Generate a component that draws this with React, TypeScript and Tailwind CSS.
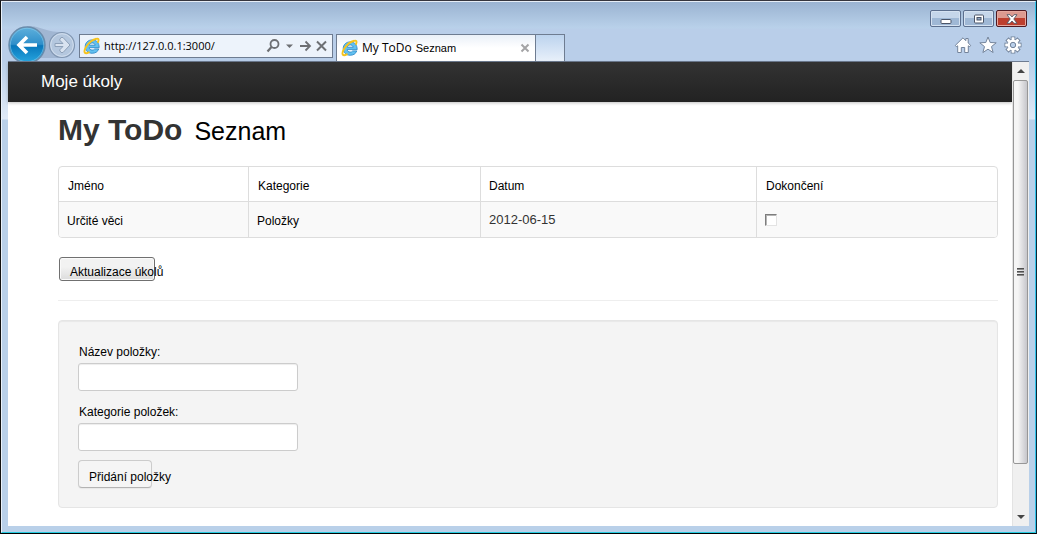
import React, { useState } from 'react';

function IeLogo() {
  return (
    <svg viewBox="0 0 18 18" className="h-[18px] w-[18px] shrink-0" aria-hidden="true">
      <path
        d="M16.200 10.600H6.200c.2 1.600 1.400 2.500 3 2.500 1.100 0 2-.4 2.500-1.200h4.100c-.9 2.700-3.400 4.400-6.600 4.400-4.100 0-7-2.700-7-6.700 0-3.900 2.900-6.700 7-6.700 4.200 0 7 2.900 7 7.700zM6.300 8.200h5.800c-.2-1.400-1.300-2.300-2.800-2.300-1.600 0-2.700.9-3 2.300z"
        fill="#62c0ef"
        stroke="#2583c4"
        strokeWidth="0.8"
      />
      <path
        d="M15 5c1.200-2.500.4-3.700-1.700-3.200C10 2.500 5.500 6.100 3 10c-2.100 3.500-2.100 6.300.2 6.200.8 0 1.700-.4 2.600-.9"
        fill="none"
        stroke="#f5c31c"
        strokeWidth="1.900"
        strokeLinecap="round"
      />
    </svg>
  );
}

function NavigationButtons() {
  return (
    <div className="relative flex h-9 items-start self-end overflow-hidden">
      <svg viewBox="0 0 71 36" className="absolute top-0 left-0 h-9 w-[71px]" aria-hidden="true">
        <path d="M20 1C36 1 36 7 55 7V33H20Z" fill="#93a9c6" opacity="0.65" />
      </svg>
      <button type="button" aria-label="Zpět" className="relative h-9 w-10">
        <svg viewBox="0 0 40 36" className="h-9 w-10">
          <defs>
            <linearGradient id="backFill" x1="0" y1="0" x2="0" y2="1">
              <stop offset="0" stopColor="#5fb0dc" />
              <stop offset="0.48" stopColor="#2f8fca" />
              <stop offset="0.52" stopColor="#0877bb" />
              <stop offset="1" stopColor="#28a7e0" />
            </linearGradient>
          </defs>
          <circle cx="20" cy="20" r="18" fill="url(#backFill)" stroke="#6a8cab" strokeWidth="1.500" />
          <circle cx="20" cy="20" r="16.700" fill="none" stroke="#8ccbea" strokeWidth="0.600" />
          <path d="M30 20H12M20 12 12 20l8 8" fill="none" stroke="#fff" strokeWidth="3.600" />
        </svg>
      </button>
      <button type="button" aria-label="Vpřed" className="relative h-9 w-8">
        <svg viewBox="0 0 32 36" className="h-9 w-8">
          <circle cx="15" cy="20" r="12.500" fill="#b4c7de" stroke="#8196b1" strokeWidth="1.200" />
          <circle cx="15" cy="20" r="11.300" fill="none" stroke="#d4e0ee" strokeWidth="0.900" />
          <path
            d="M8 18.500h8l-3.500-3.500 1.500-2.500h2l7 7.500-7 7.500h-2l-1.500-2.500 3.500-3.500H8z"
            fill="#d9e3f0"
            stroke="#8da0b8"
            strokeWidth="1"
          />
        </svg>
      </button>
    </div>
  );
}

function AddressBar() {
  const [address, setAddress] = useState('http://127.0.0.1:3000/');
  return (
    <div className="mb-[3px] flex h-6 w-[254px] items-center border border-[#6e7c91] bg-[#edf3fb] pl-[3px]">
      <IeLogo />
      <input
        aria-label="Adresa"
        value={address}
        onChange={(e) => setAddress(e.target.value)}
        className="ml-[3px] min-w-0 flex-1 bg-transparent font-['Open_Sans',sans-serif] text-[11px] leading-5 text-black outline-none"
      />
      <button type="button" aria-label="Hledat" className="w-4">
        <svg viewBox="0 0 16 16" className="h-4 w-4" fill="none" stroke="#6d6f73" strokeWidth="1.800">
          <circle cx="9.500" cy="6" r="4" />
          <path d="M6.500 9 2.500 13.500" strokeWidth="2.200" />
        </svg>
      </button>
      <button type="button" aria-label="Historie adres" className="w-4">
        <svg viewBox="0 0 16 16" className="h-4 w-4">
          <path d="M5 6.500h7L8.500 10z" fill="#6d6f73" />
        </svg>
      </button>
      <button type="button" aria-label="Přejít" className="w-4">
        <svg viewBox="0 0 16 16" className="h-4 w-4" fill="none" stroke="#6d6f73" strokeWidth="1.800">
          <path d="M3 8h10M8.500 3.500 13 8l-4.500 4.500" />
        </svg>
      </button>
      <button type="button" aria-label="Zastavit" className="mr-[3px] w-4">
        <svg viewBox="0 0 16 16" className="h-4 w-4" fill="none" stroke="#6d6f73" strokeWidth="2">
          <path d="m4 3.500 9 9M13 3.500l-9 9" />
        </svg>
      </button>
    </div>
  );
}

function Tabs() {
  return (
    <div className="ml-[3px] flex h-[27px]">
      <div className="flex w-[200px] items-center border border-b-0 border-[#6e7c91] bg-linear-to-b from-[#eaf0f8] to-white to-50% pl-1">
        <IeLogo />
        <a href="#todo" className="ml-[3px] flex flex-1 items-baseline gap-1 text-black">
          <span className="font-['Open_Sans',sans-serif] text-[12px] leading-5">My ToDo</span>
          <span className="text-[11px] leading-5">Seznam</span>
        </a>
        <button type="button" aria-label="Zavřít kartu" className="mr-1">
          <svg viewBox="0 0 12 12" className="h-3 w-3" fill="none" stroke="#a4a4a6" strokeWidth="2">
            <path d="m2.500 2.500 7 7M9.500 2.500l-7 7" />
          </svg>
        </button>
      </div>
      <button
        type="button"
        aria-label="Nová karta"
        className="w-[29px] border border-b-0 border-l-0 border-[#6e7c91] bg-linear-to-b from-[#bcd3ee] to-[#e8f0fa]"
      />
    </div>
  );
}

const captionBase = 'flex h-[17px] w-[31px] items-center justify-center rounded-[2px] border';

function WindowControls() {
  return (
    <div className="flex gap-[2px]">
      <button
        type="button"
        aria-label="Minimalizovat"
        className={`${captionBase} border-[#5c6f8e] bg-linear-to-b from-[#c5d6ea] from-45% to-[#9fb8d5] to-50% shadow-[inset_0_0_0_1px_#d5e2f1]`}
      >
        <svg viewBox="0 0 12 10" className="h-[10px] w-3">
          <rect x="1" y="5.500" width="10" height="4" rx="1" fill="#fff" stroke="#4b5568" />
        </svg>
      </button>
      <button
        type="button"
        aria-label="Maximalizovat"
        className={`${captionBase} border-[#5c6f8e] bg-linear-to-b from-[#c5d6ea] from-45% to-[#9fb8d5] to-50% shadow-[inset_0_0_0_1px_#d5e2f1]`}
      >
        <svg viewBox="0 0 12 10" className="h-[10px] w-3">
          <rect x="1.500" y="1" width="9" height="8" rx="1" fill="#fff" stroke="#4b5568" />
          <rect x="4" y="3.500" width="4" height="2.500" fill="#8fa7c5" stroke="#4b5568" />
        </svg>
      </button>
      <button
        type="button"
        aria-label="Zavřít"
        className={`${captionBase} border-[#4f1a22] bg-linear-to-b from-[#dc9a90] from-45% to-[#bd3f2e] to-50% shadow-[inset_0_0_0_1px_#e6a99f]`}
      >
        <svg viewBox="0 0 12 10" className="h-[10px] w-3">
          <path
            d="M1 .7h3l2 2.300 2-2.300h3L7.800 5 11 9.300H8L6 7 4 9.300H1L4.200 5z"
            fill="#fff"
            stroke="#555a68"
            strokeWidth="0.900"
          />
        </svg>
      </button>
    </div>
  );
}

function ToolIcons() {
  const teeth = [0, 45, 90, 135, 180, 225, 270, 315];
  return (
    <div className="mr-[5px] flex gap-[7px]">
      <button type="button" aria-label="Domů">
        <svg viewBox="0 0 18 18" className="h-[18px] w-[18px]">
          <path
            d="M9 1.800 1.300 9.400l1 1.300L3.700 9.800V16.500H7.300V11.500h3.400v5h3.600V9.800l1.400.9 1-1.300L14.200 7V2.500h-2.400v2.200z"
            fill="#fff"
            stroke="#73839a"
            strokeLinejoin="round"
          />
        </svg>
      </button>
      <button type="button" aria-label="Oblíbené">
        <svg viewBox="0 0 18 18" className="h-[18px] w-[18px]">
          <path
            d="m9 1 2.200 5.500 6 .300-4.700 3.800 1.600 5.900L9 13.200l-5.100 3.300 1.600-5.900L.8 6.800l6-.300z"
            fill="#fff"
            stroke="#73839a"
            strokeLinejoin="round"
          />
        </svg>
      </button>
      <button type="button" aria-label="Nástroje">
        <svg viewBox="0 0 18 18" className="h-[18px] w-[18px]">
          {teeth.map((a) => (
            <rect key={a} x="7.200" y="1" width="3.600" height="5" fill="#fff" stroke="#73839a" transform={`rotate(${a} 9 9)`} />
          ))}
          <circle cx="9" cy="9" r="5.800" fill="#fff" stroke="#73839a" strokeWidth="0.700" />
          {teeth.map((a) => (
            <rect key={a} x="7.700" y="1.500" width="2.600" height="4" fill="#fff" transform={`rotate(${a} 9 9)`} />
          ))}
          <circle cx="9" cy="9" r="2.700" fill="#b9cfe9" stroke="#73839a" />
        </svg>
      </button>
    </div>
  );
}

function Scrollbar() {
  return (
    <div className="flex w-[17px] shrink-0 flex-col border-l border-[#e3e3e3] bg-[#f0f0f0] pr-px" aria-hidden="true">
      <div className="flex h-[18px] items-center justify-center">
        <svg viewBox="0 0 8 4" className="h-1 w-2">
          <path d="M0 4 4 0l4 4z" fill="#454545" />
        </svg>
      </div>
      <div className="flex flex-1 items-center justify-center rounded-[2px] border border-[#979797] bg-linear-to-r from-[#f5f5f5] from-30% to-[#c6c6cb]">
        <div className="flex flex-col gap-px">
          <div className="h-[2px] w-[7px] border-t border-[#4f4f4f] bg-[#8d8d8d]" />
          <div className="h-[2px] w-[7px] border-t border-[#4f4f4f] bg-[#8d8d8d]" />
          <div className="h-[2px] w-[7px] border-t border-[#4f4f4f] bg-[#8d8d8d]" />
        </div>
      </div>
      <div className="h-11" />
      <div className="flex h-[18px] items-center justify-center">
        <svg viewBox="0 0 8 4" className="h-1 w-2">
          <path d="M0 0h8L4 4z" fill="#454545" />
        </svg>
      </div>
    </div>
  );
}

function TodoTable() {
  const [done, setDone] = useState(false);
  return (
    <div className="overflow-hidden rounded-[4px] border border-[#dddddd]">
      <table className="w-full table-fixed border-separate border-spacing-0 text-left text-[12px] leading-[18px] text-black">
        <thead>
          <tr className="h-[34px]">
            <th className="w-[189px] pt-[3px] pl-[9px] font-normal">Jméno</th>
            <th className="w-[232px] border-l border-[#dddddd] pt-[3px] pl-[9px] font-normal">Kategorie</th>
            <th className="w-[276px] border-l border-[#dddddd] pt-[3px] pl-2 font-normal">Datum</th>
            <th className="border-l border-[#dddddd] pt-[3px] pl-[9px] font-normal">Dokončení</th>
          </tr>
        </thead>
        <tbody>
          <tr className="h-9 bg-[#f9f9f9]">
            <td className="border-t border-[#dddddd] pt-[3px] pl-2">Určité věci</td>
            <td className="border-t border-l border-[#dddddd] pt-[3px] pl-2">Položky</td>
            <td className="border-t border-l border-[#dddddd] pl-2 text-[13px] text-[#333333]">2012-06-15</td>
            <td className="border-t border-l border-[#dddddd] pl-2">
              <input
                type="checkbox"
                aria-label="Dokončeno: Určité věci"
                checked={done}
                onChange={(e) => setDone(e.target.checked)}
                className="block h-3 w-3 appearance-none border border-t-[#7d7d7d] border-r-[#e3e3e3] border-b-[#e3e3e3] border-l-[#7d7d7d] bg-white shadow-[inset_1px_1px_0_#b5b5b5] checked:bg-[#555555]"
              />
            </td>
          </tr>
        </tbody>
      </table>
    </div>
  );
}

const fieldClass =
  'block h-7 w-[220px] rounded-[3px] border border-[#cccccc] bg-white px-1 text-[13px] text-[#555555] shadow-[inset_0_1px_1px_rgba(0,0,0,0.075)]';

function AddItemForm() {
  return (
    <form
      onSubmit={(e) => e.preventDefault()}
      className="mt-[19px] rounded-[4px] border border-[#e5e5e5] bg-[#f4f4f4] px-[19px] pt-[21px] pb-[19px] text-[12px] leading-5 text-black shadow-[inset_0_1px_1px_rgba(0,0,0,0.05)]"
    >
      <label htmlFor="item-name" className="mb-px block pl-px">
        Název položky:
      </label>
      <input id="item-name" type="text" className={fieldClass} />
      <label htmlFor="item-category" className="mt-[11px] mb-px block pl-px">
        Kategorie položek:
      </label>
      <input id="item-category" type="text" className={fieldClass} />
      <button
        type="submit"
        className="mt-[9px] block h-7 w-[74px] rounded-[4px] border border-[#cccccc] border-b-[#b3b3b3] bg-[#f5f5f5] pt-[5px] pl-[10px] text-left whitespace-nowrap shadow-[0_1px_1px_rgba(0,0,0,0.05)]"
      >
        Přidání položky
      </button>
    </form>
  );
}

export default function App() {
  return (
    <div className="flex min-h-screen flex-col border border-t-[#35353d] border-r-[#0b2638] border-b-black border-l-[#111111] bg-[linear-gradient(to_bottom,#b9cfe9_60px,#dfe9f6_118px,#b9d0e9_119px)] font-['Liberation_Sans',Arial,sans-serif]">
      <div className="flex flex-1 flex-col border border-t-[#e6edf6] border-r-[#2fc3ea] border-b-[#26cbe0] border-l-[#eaf2fb]">
        <header className="flex h-[59px] shrink-0 items-end justify-between bg-[linear-gradient(to_bottom,#9ab3d1_0px,#b9d1ea_26px,#b9cee9_27px)] pr-[2px] pl-[5px]">
          <div className="flex items-end">
            <NavigationButtons />
            <AddressBar />
            <Tabs />
          </div>
          <div className="flex h-full flex-col items-end justify-between pt-2 pr-[6px] pb-[7px]">
            <WindowControls />
            <ToolIcons />
          </div>
        </header>
        <div className="mx-[6px] mb-[6px] flex flex-1 border-t border-[#6e7c91] bg-white">
          <div className="flex min-w-0 flex-1 flex-col">
            <nav className="flex h-10 items-center bg-linear-to-b from-[#333333] to-[#222222] pl-[33px] shadow-[0_1px_3px_rgba(0,0,0,0.25)]">
              <a href="#todo" className="text-[17px] leading-5 text-white">
                Moje úkoly
              </a>
            </nav>
            <main id="todo" className="mr-[14px] ml-[50px] pt-[10px]">
              <h1 className="mb-[17px] flex items-baseline gap-3 leading-9">
                <span className="text-[30px] font-bold text-[#333333]">My ToDo</span>
                <span className="text-[25px] font-normal text-black">Seznam</span>
              </h1>
              <TodoTable />
              <button
                type="button"
                className="mt-[19px] ml-px block h-6 w-24 rounded-[3px] border border-[#707070] bg-linear-to-b from-[#f2f2f2] from-40% to-[#dcdcdc] pt-1 pl-[10px] text-left text-[12px] leading-5 whitespace-nowrap text-black shadow-[inset_0_0_0_1px_#fafafa]"
              >
                Aktualizace úkolů
              </button>
              <hr className="mt-[19px] border-[#eeeeee]" />
              <AddItemForm />
            </main>
          </div>
          <Scrollbar />
        </div>
      </div>
    </div>
  );
}
